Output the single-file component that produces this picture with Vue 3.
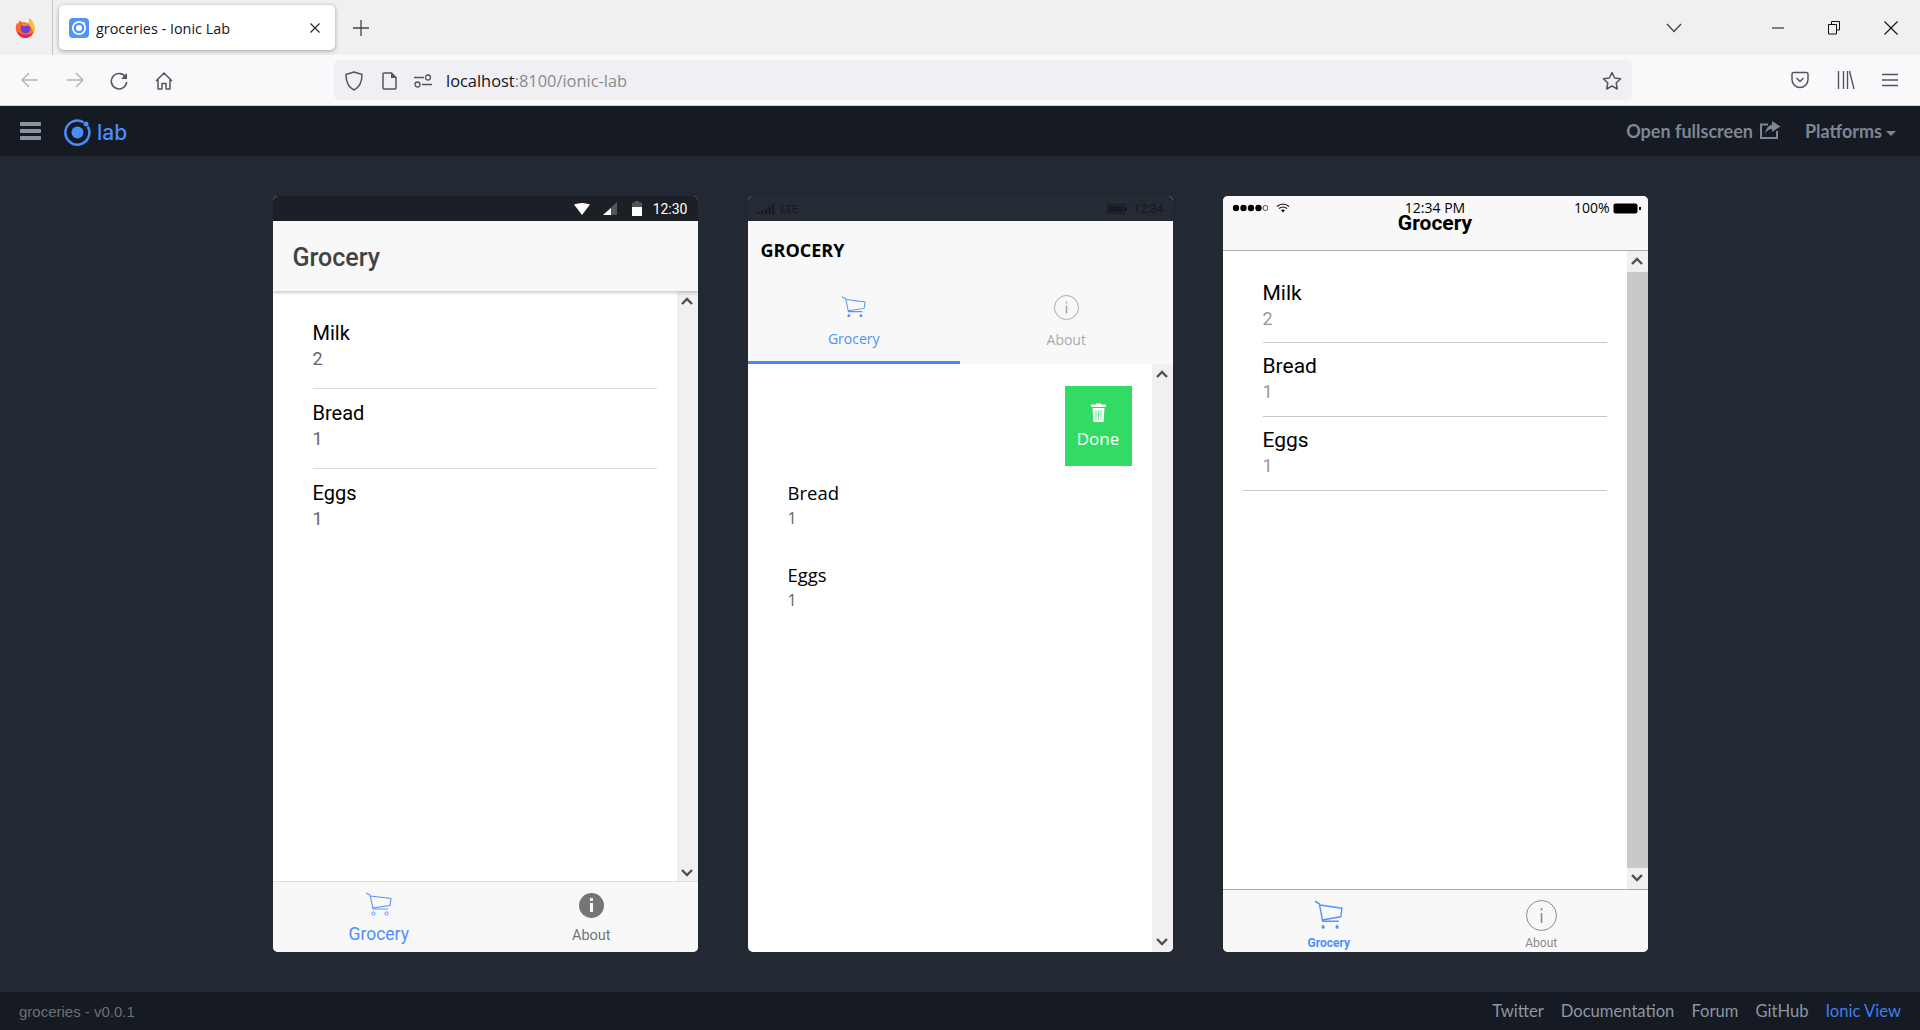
<script setup>
const cart = 'M1 1 L5 3 L8 17 H23 M5.5 4 L26 6.5 L25 13.5 L7.5 16'
const androidItems = [
  { name: 'Milk', qty: 2 },
  { name: 'Bread', qty: 1 },
  { name: 'Eggs', qty: 1 },
]
const wpItems = androidItems.slice(1)
const footerLinks = ['Twitter', 'Documentation', 'Forum', 'GitHub']
</script>

<template>
  <div class="window">
    <!-- browser tabs -->
    <div class="tabstrip">
      <div class="ff-slot">
        <svg width="20" height="20" viewBox="0 0 20 20">
          <path d="M2 5 C0 8 0.500 12 2 15 C4 18.500 7 20 10 20 C15 20 19.500 16 19.500 10.500 C19.500 6 17 2.500 14 0 C15 3 14 5 12.500 5.500 C11 4 9 4 7 4.500 L5 2.500 C4 3.500 3.500 4.500 3.500 5.500Z" fill="#f7692f" />
          <path d="M14 0 C17 2.500 19.500 6 19.500 10.500 C19.500 12 19 14 18 15 C18 11 16 8 13 7 C14 5 15 3 14 0Z" fill="#ffc02e" />
          <path d="M2 13 C3.500 17.500 7 20 10 20 C14 20 17 18 18.500 14.500 C15 17.500 6 17.500 2 13Z" fill="#e5245e" />
          <circle cx="10.500" cy="10.500" r="4.800" fill="#6e3ddb" />
          <path d="M7 6 C10 4.500 13 6 14 8 C12 7.500 10 7.500 8.500 8.500Z" fill="#ff8a2b" />
        </svg>
      </div>
      <div class="tab">
        <svg class="favicon" width="20" height="20" viewBox="0 0 20 20">
          <rect width="20" height="20" rx="4" fill="#4f94fb" />
          <circle cx="10" cy="10" r="6.2" fill="none" stroke="#fff" stroke-width="1.7" />
          <circle cx="10" cy="10" r="3" fill="#fff" />
          <circle cx="14.7" cy="5.3" r="1.2" fill="#fff" />
        </svg>
        <span class="tab-title">groceries - Ionic Lab</span>
        <svg class="tab-close" width="12" height="12" viewBox="0 0 12 12"><path d="M1.5 1.5 L10.5 10.5 M10.5 1.5 L1.5 10.5" stroke="#222" stroke-width="1.1" /></svg>
      </div>
      <svg class="newtab" width="16" height="16" viewBox="0 0 16 16"><path d="M8 0 V16 M0 8 H16" stroke="#444" stroke-width="1.3" /></svg>
      <svg class="tabs-chevron" width="16" height="10" viewBox="0 0 16 10"><path d="M1 1 L8 8.5 L15 1" fill="none" stroke="#444" stroke-width="1.3" /></svg>
      <div class="win-btns">
        <svg width="12" height="12" viewBox="0 0 12 12"><path d="M0 6 H12" stroke="#111" /></svg>
        <svg width="12" height="14" viewBox="0 0 12 14"><path d="M3.5 3 V.5 H11.5 V9 H9 M.5 3.5 H8.5 V13 H.5Z" fill="none" stroke="#111" /></svg>
        <svg width="14" height="14" viewBox="0 0 14 14"><path d="M.5 .5 L13.5 13.5 M13.5 .5 L.5 13.5" stroke="#111" stroke-width="1.1" /></svg>
      </div>
    </div>

    <!-- browser toolbar -->
    <div class="toolbar">
      <div class="nav-btns">
        <svg width="18" height="16" viewBox="0 0 18 16"><path d="M17 8 H1 M8 1 L1 8 L8 15" fill="none" stroke="#b4b4b8" stroke-width="1.5" /></svg>
        <svg width="18" height="16" viewBox="0 0 18 16"><path d="M1 8 H17 M10 1 L17 8 L10 15" fill="none" stroke="#b4b4b8" stroke-width="1.5" /></svg>
        <svg width="18" height="18" viewBox="0 0 18 18"><path d="M15.5 5 A7.7 7.7 0 1 0 16.7 10" fill="none" stroke="#55555c" stroke-width="1.6" /><path d="M17 1 V7 H11Z" fill="#55555c" /></svg>
        <svg width="18" height="18" viewBox="0 0 18 18"><path d="M1 9 L9 1 L17 9 M3 7.5 V17 H7 V11.5 H11 V17 H15 V7.5" fill="none" stroke="#55555c" stroke-width="1.5" stroke-linejoin="round" /></svg>
      </div>
      <div class="urlbar">
        <svg width="18" height="20" viewBox="0 0 18 20"><path d="M9 1 L17 3.5 C17 11 15 16 9 19 C3 16 1 11 1 3.5Z" fill="none" stroke="#55555c" stroke-width="1.5" stroke-linejoin="round" /></svg>
        <svg width="15" height="18" viewBox="0 0 15 18"><path d="M2 1 H9.5 L14 5.5 V16 Q14 17 13 17 H2 Q1 17 1 16 V2 Q1 1 2 1Z" fill="none" stroke="#55555c" stroke-width="1.5" /><path d="M9 1 V6 H14Z" fill="#55555c" /></svg>
        <svg class="perm" width="18" height="14" viewBox="0 0 18 14"><path d="M0 3.5 H10 M8 10.5 H18" stroke="#55555c" stroke-width="1.4" /><circle cx="14" cy="3.5" r="2.5" fill="none" stroke="#55555c" stroke-width="1.3" /><circle cx="3.5" cy="10.5" r="2.5" fill="none" stroke="#55555c" stroke-width="1.3" /></svg>
        <span class="url">localhost<span class="url-rest">:8100/ionic-lab</span></span>
        <svg class="star" width="20" height="20" viewBox="0 0 20 20"><path d="M10 1.5 L12.6 7 L18.6 7.8 L14.2 12 L15.3 18 L10 15 L4.7 18 L5.8 12 L1.4 7.8 L7.4 7Z" fill="none" stroke="#55555c" stroke-width="1.5" stroke-linejoin="round" /></svg>
      </div>
      <div class="tool-btns">
        <svg width="18" height="18" viewBox="0 0 18 18"><path d="M2.5 1.5 H15.5 Q17 1.5 17 3 V8.5 A8 8 0 0 1 1 8.5 V3 Q1 1.5 2.5 1.5Z" fill="none" stroke="#55555c" stroke-width="1.5" /><path d="M5.5 7 L9 10.5 L12.5 7" fill="none" stroke="#55555c" stroke-width="1.5" /></svg>
        <svg width="18" height="20" viewBox="0 0 18 20"><path d="M1.5 1 V19 M6.5 1 V19 M10.5 1 V19 M12.5 1 L17 19" stroke="#55555c" stroke-width="1.4" /></svg>
        <svg width="16" height="14" viewBox="0 0 16 14"><path d="M0 1.5 H16 M0 7 H16 M0 12.5 H16" stroke="#55555c" stroke-width="1.4" /></svg>
      </div>
    </div>

    <!-- ionic lab header -->
    <header class="lab-header">
      <div class="menu-icon"><i></i><i></i><i></i></div>
      <svg class="lab-logo" width="27" height="27" viewBox="0 0 27 27">
        <path d="M19.500 3.300 A12 12 0 1 0 23.700 7.500" fill="none" stroke="#4a8bfc" stroke-width="2.500" />
        <circle cx="13.500" cy="13.500" r="6" fill="#4a8bfc" />
        <circle cx="22" cy="5" r="2.500" fill="#4a8bfc" />
      </svg>
      <span class="lab-word">lab</span>
      <a class="lab-action fullscreen">Open fullscreen</a>
      <svg class="share" width="21" height="18" viewBox="0 0 21 18">
        <path d="M8 3.5 H1 V17 H17 V10" fill="none" stroke="#7c8794" stroke-width="2" />
        <path d="M12 0 L20.5 5.5 L12 11 V8 Q7.5 8 5 13 Q6 5 12 3.5Z" fill="#7c8794" />
      </svg>
      <a class="lab-action">Platforms</a>
      <i class="caret"></i>
    </header>

    <main class="lab-main">
      <!-- android -->
      <section class="phone">
        <div class="status status-md">
          <svg width="16" height="12" viewBox="0 0 16 12"><path d="M0 1.5 Q8 -1.5 16 1.5 L8 12Z" fill="#fff" /></svg>
          <svg class="sig" width="14" height="13" viewBox="0 0 14 13"><path d="M14 0 V13 H0Z" fill="#555" /><path d="M8 6 V13 H0Z" fill="#fff" /></svg>
          <svg class="bat" width="10" height="15" viewBox="0 0 10 15"><path d="M3 0 H7 V1.5 H10 V15 H0 V1.5 H3Z" fill="#555" /><rect y="6" width="10" height="9" fill="#fff" /></svg>
          <span>12:30</span>
        </div>
        <div class="md-toolbar">Grocery</div>
        <div class="content">
          <div class="list md-list">
            <div v-for="it in androidItems" :key="it.name" class="md-item">
              <div class="name">{{ it.name }}</div>
              <div class="qty">{{ it.qty }}</div>
            </div>
          </div>
          <div class="scrollbar md-scroll">
            <svg width="12" height="8" viewBox="0 0 12 8"><path d="M1 7 L6 2 L11 7" fill="none" stroke="#505050" stroke-width="2.4" /></svg>
            <svg width="12" height="8" viewBox="0 0 12 8"><path d="M1 1 L6 6 L11 1" fill="none" stroke="#505050" stroke-width="2.4" /></svg>
          </div>
        </div>
        <nav class="md-tabs">
          <div class="md-tab active">
            <svg width="27" height="24" viewBox="0 0 27 24"><path :d="cart" fill="none" stroke="#5b93fb" stroke-width="1.1" /><circle cx="8.5" cy="21.5" r="1.6" fill="none" stroke="#5b93fb" /><circle cx="21.5" cy="21.5" r="1.6" fill="none" stroke="#5b93fb" /></svg>
            <span class="md-label-active">Grocery</span>
          </div>
          <div class="md-tab">
            <svg width="25" height="25" viewBox="0 0 25 25"><circle cx="12.5" cy="12.5" r="12.5" fill="#757575" /><rect x="11" y="5" width="3" height="3" fill="#f8f8f8" /><rect x="11" y="10" width="3" height="9" fill="#f8f8f8" /></svg>
            <span class="md-label">About</span>
          </div>
        </nav>
      </section>

      <!-- windows -->
      <section class="phone">
        <div class="status status-wp">
          <svg width="17" height="10" viewBox="0 0 17 10"><path d="M0 8h2v2H0zM4 6.5h2V10H4zM8 5h2v5H8zM11.500 2.500h2V10h-2zM15 0h2v10h-2z" fill="#16191e" /></svg>
          <span class="lte">LTE</span>
          <svg class="wp-bat" width="20" height="10" viewBox="0 0 20 10"><rect x=".5" y=".5" width="17" height="9" fill="none" stroke="#16191e" /><rect x="2" y="2" width="14" height="6" fill="#16191e" /><rect x="18" y="3" width="2" height="4" fill="#16191e" /></svg>
          <span>12:34</span>
        </div>
        <div class="wp-head">
          <div class="wp-title">GROCERY</div>
          <nav class="wp-tabs">
            <div class="wp-tab active">
              <svg width="25" height="24" viewBox="0 0 27 24"><path :d="cart" fill="none" stroke="#5b93fb" stroke-width="1.1" /><circle cx="8.500" cy="21.500" r="1.600" fill="#5b93fb" /><circle cx="21.500" cy="21.500" r="1.600" fill="#5b93fb" /></svg>
              <span>Grocery</span>
            </div>
            <div class="wp-tab">
              <svg width="25" height="25" viewBox="0 0 25 25"><circle cx="12.5" cy="12.5" r="12" fill="none" stroke="#aaa" /><rect x="11.700" y="10.500" width="1.600" height="8" fill="#aaa" /><rect x="11.700" y="6.500" width="1.600" height="2" fill="#aaa" /></svg>
              <span>About</span>
            </div>
          </nav>
        </div>
        <div class="content">
          <div class="list wp-list">
            <div class="wp-done-row">
              <button class="done">
                <svg width="15" height="19" viewBox="0 0 15 19"><path d="M5 1.500 V.5 H10 V1.500 H15 V4 H0 V1.500Z M1.500 5 H13.500 L12.500 19 H2.500Z" fill="#fff" /><path d="M5 7 V17 M7.500 7 V17 M10 7 V17" stroke="#33dd66" stroke-width=".7" /></svg>
                <span>Done</span>
              </button>
            </div>
            <div v-for="it in wpItems" :key="it.name" class="wp-item">
              <div class="name">{{ it.name }}</div>
              <div class="qty">{{ it.qty }}</div>
            </div>
          </div>
          <div class="scrollbar wp-scroll">
            <svg width="12" height="8" viewBox="0 0 12 8"><path d="M1 7 L6 2 L11 7" fill="none" stroke="#505050" stroke-width="2.4" /></svg>
            <svg width="12" height="8" viewBox="0 0 12 8"><path d="M1 1 L6 6 L11 1" fill="none" stroke="#505050" stroke-width="2.4" /></svg>
          </div>
        </div>
      </section>

      <!-- ios -->
      <section class="phone">
        <div class="ios-head">
          <div class="ios-status">
            <span class="ios-left">
              <svg width="36" height="8" viewBox="0 0 36 8"><circle cx="4" cy="4" r="3.200" /><circle cx="11.500" cy="4" r="3.200" /><circle cx="19" cy="4" r="3.200" /><circle cx="26.500" cy="4" r="3.200" /><circle cx="33.500" cy="4" r="2.500" fill="none" stroke="#000" stroke-width=".7" /></svg>
              <svg width="14" height="10" viewBox="0 0 14 10"><path d="M1 3.500 Q7 -1.500 13 3.500 M3 5.500 Q7 2.500 11 5.500" fill="none" stroke="#000" stroke-width="1.100" /><path d="M5 7 Q7 5.800 9 7 L7 9.500Z" /></svg>
            </span>
            <span class="ios-time">12:34 PM</span>
            <span class="ios-right">
              <span>100%</span>
              <svg width="28" height="11" viewBox="0 0 28 11"><rect x=".5" y=".5" width="24" height="10" rx="2" /><rect x="26" y="4" width="2" height="3" /></svg>
            </span>
          </div>
          <div class="ios-title">Grocery</div>
        </div>
        <div class="content">
          <div class="list ios-list">
            <div v-for="it in androidItems" :key="it.name" class="ios-item">
              <div class="ios-inner">
                <div class="name">{{ it.name }}</div>
                <div class="qty">{{ it.qty }}</div>
              </div>
            </div>
          </div>
          <div class="scrollbar has-thumb">
            <svg width="12" height="8" viewBox="0 0 12 8"><path d="M1 7 L6 2 L11 7" fill="none" stroke="#505050" stroke-width="2.4" /></svg>
            <div class="thumb"></div>
            <svg width="12" height="8" viewBox="0 0 12 8"><path d="M1 1 L6 6 L11 1" fill="none" stroke="#505050" stroke-width="2.4" /></svg>
          </div>
        </div>
        <nav class="ios-tabs">
          <div class="ios-tab active">
            <svg width="29" height="30" viewBox="0 0 27 24" preserveAspectRatio="none"><path :d="cart" fill="none" stroke="#5b93fb" stroke-width="1.300" /><circle cx="8.500" cy="21.500" r="1.500" fill="#5b93fb" /><circle cx="21.500" cy="21.500" r="1.500" fill="#5b93fb" /></svg>
            <span>Grocery</span>
          </div>
          <div class="ios-tab">
            <svg width="31" height="31" viewBox="0 0 31 31"><circle cx="15.500" cy="15.500" r="15" fill="none" stroke="#8c8c8c" /><rect x="14.700" y="13" width="1.600" height="10" fill="#8c8c8c" /><rect x="14.700" y="8" width="1.600" height="2.500" fill="#8c8c8c" /></svg>
            <span>About</span>
          </div>
        </nav>
      </section>
    </main>

    <footer class="lab-footer">
      <span class="version">groceries - v0.0.1</span>
      <div class="links">
        <a v-for="l in footerLinks" :key="l">{{ l }}</a>
        <a class="ionic-view">Ionic View</a>
      </div>
    </footer>
  </div>
</template>

<style>
html, body { margin: 0; overflow: hidden; }
</style>

<style scoped>
.window { width: 1920px; height: 1030px; display: flex; flex-direction: column; font-family: Roboto, sans-serif; overflow: hidden; }

.tabstrip { height: 55px; flex-shrink: 0; background: #f0f0f0; display: flex; align-items: center; font-family: "Open Sans", sans-serif; }
.ff-slot { width: 53px; height: 100%; box-sizing: border-box; border-right: 1px solid #c8c8c8; display: flex; align-items: center; justify-content: center; padding-right: 2px; }
.tab { margin-left: 6px; width: 276px; height: 45px; box-sizing: border-box; padding: 0 14px 0 10px; background: #fff; border-radius: 5px; box-shadow: 0 1px 4px rgba(0,0,0,0.35); display: flex; align-items: center; }
.tab-title { margin-left: 7px; font-size: 14.400px; color: #15141a; flex: 1; white-space: nowrap; padding-top: 1px; }
.newtab { margin-left: 18px; }
.tabs-chevron { margin-left: auto; margin-right: 90px; }
.win-btns { width: 148px; padding-right: 22px; box-sizing: border-box; display: flex; align-items: center; justify-content: space-between; }

.toolbar { height: 50px; flex-shrink: 0; background: #f9f9fb; border-bottom: 1px solid #d4d4d4; box-sizing: content-box; display: flex; align-items: center; }
.nav-btns { width: 334px; padding: 2px 161px 0 21px; box-sizing: border-box; display: flex; justify-content: space-between; }
.urlbar { width: 1298px; height: 40px; box-sizing: border-box; padding: 1px 10px 0 11px; background: #f0f0f4; border-radius: 5px; display: flex; align-items: center; gap: 19px; }
.perm { margin-left: -2px; }
.url { margin-left: -5px; font-size: 16.400px; color: #15141a; font-family: "Open Sans", sans-serif; }
.url-rest { color: #8a8a8e; }
.star { margin-left: auto; }
.tool-btns { flex: 1; padding: 0 22px 0 159px; display: flex; align-items: center; justify-content: space-between; }

.lab-header { height: 50px; flex-shrink: 0; background: #161a22; display: flex; align-items: center; padding: 0 24px 0 20px; box-sizing: border-box; }
.menu-icon { width: 21px; display: flex; flex-direction: column; gap: 3px; }
.menu-icon i { height: 4px; border-radius: 1px; background: #8a93a0; display: block; }
.lab-logo { margin: 3px 0 0 23px; }
.lab-word { margin: 2px 0 0 6px; font-size: 21px; font-weight: 500; color: #4a8bfc; font-family: Inter, sans-serif; }
.lab-action { font-family: Lato, sans-serif; font-weight: 700; font-size: 18px; color: #7c8794; margin-top: -1px; }
.fullscreen { margin-left: auto; }
.share { margin: -2px 24px 0 7px; }
.caret { margin-left: 4px; margin-top: 4px; width: 0; height: 0; border: 5.5px solid transparent; border-top-color: #7c8794; border-bottom: 0; }

.lab-main { flex: 1; background: #232932; display: flex; justify-content: center; gap: 50px; padding: 40px 0; box-sizing: border-box; min-height: 0; }
.phone { width: 425px; background: #fff; border-radius: 5px; overflow: hidden; display: flex; flex-direction: column; }

.status { height: 25px; flex-shrink: 0; display: flex; align-items: center; box-sizing: border-box; font-size: 14px; }
.status-md { background: #1c1f25; color: #fff; justify-content: flex-end; padding-right: 10px; }
.sig { margin-left: 13px; }
.bat { margin-left: 15px; margin-right: 11px; }
.status-wp { background: #252b34; color: #15181d; padding: 0 9px; font-size: 12px; }
.lte { margin-left: 7px; font-size: 11.500px; }
.wp-bat { margin-left: auto; margin-right: 7px; }

.md-toolbar { height: 70px; flex-shrink: 0; background: #f8f8f8; display: flex; align-items: center; padding-left: 20px; font-size: 25px; font-weight: 500; color: #424242; box-shadow: 0 2px 3px rgba(0,0,0,0.2); z-index: 1; padding-top: 2px; box-sizing: border-box; }

.content { flex: 1; display: flex; min-height: 0; }
.list { flex: 1; min-width: 0; }
.scrollbar { width: 21px; flex-shrink: 0; background: #f0f0f0; display: flex; flex-direction: column; justify-content: space-between; align-items: center; box-sizing: border-box; }
.md-scroll { padding: 6px 0 4px; }
.wp-scroll { padding: 6px 0; }
.has-thumb { padding: 0; }
.has-thumb svg { margin: 6px 0 7px; flex-shrink: 0; }
.thumb { flex: 1; background: #c9c9c9; width: 21px; }

.name { color: #000; font-size: 20px; line-height: 25px; }
.qty { font-size: 18px; line-height: 25px; color: #666; }

.md-list { padding: 18px 20px 0 40px; }
.md-item { height: 80px; box-sizing: border-box; border-bottom: 1px solid #dedede; padding-top: 12px; }
.md-item:last-child { border-bottom: 0; }

.md-tabs { height: 71px; flex-shrink: 0; background: #f8f8f8; border-top: 1px solid #e0e0e0; box-sizing: border-box; display: flex; }
.md-tab { flex: 1; display: flex; flex-direction: column; align-items: center; padding-top: 11px; gap: 8px; }
.md-tab.active { padding-top: 10px; gap: 8px; }
.md-label-active { font-size: 17.500px; line-height: 20px; color: #4f8ffb; }
.md-label { font-size: 14.500px; line-height: 20px; color: #757575; }

.wp-head { flex-shrink: 0; background: #f8f8f8; height: 143px; display: flex; flex-direction: column; }
.wp-title { font-family: "Open Sans", sans-serif; font-weight: 700; font-size: 18px; color: #000; padding: 17px 0 0 13px; line-height: 24px; height: 41px; }
.wp-tabs { flex: 1; display: flex; }
.wp-tab { flex: 1; display: flex; flex-direction: column; align-items: center; gap: 10px; padding-top: 16px; box-sizing: border-box; font-family: "Open Sans", sans-serif; font-size: 14px; line-height: 19px; color: #aaa; }
.wp-tab.active { color: #4f8ffb; border-bottom: 3px solid #4a87f5; }

.wp-list { padding: 0; }
.wp-done-row { display: flex; justify-content: flex-end; padding: 22px 20px 0 0; }
.done { width: 67px; height: 80px; border: 0; padding: 0; background: #32db64; color: #fff; font-family: "Open Sans", sans-serif; font-size: 17px; display: flex; flex-direction: column; align-items: center; justify-content: center; gap: 5px; }
.wp-item { padding: 14px 0 0 40px; height: 68px; }
.wp-item .name { font-size: 18.500px; font-family: "Open Sans", sans-serif; }
.wp-item .qty { font-size: 16px; line-height: 26px; font-family: "Open Sans", sans-serif; }

.ios-head { height: 55px; flex-shrink: 0; background: #f8f8f8; border-bottom: 1px solid #aaa; box-sizing: border-box; padding: 0 7px; }
.ios-status { height: 24px; display: flex; align-items: center; justify-content: space-between; position: relative; font-family: "Open Sans", sans-serif; font-size: 14px; line-height: 14px; color: #000; }
.ios-left { display: flex; align-items: center; gap: 8px; padding-left: 2px; }
.ios-time { position: absolute; left: 50%; transform: translateX(-50%); white-space: nowrap; }
.ios-right { display: flex; align-items: center; gap: 3px; }
.ios-title { text-align: center; font-size: 21px; font-weight: 700; line-height: 16px; color: #000; margin-top: -5px; }

.ios-list { padding: 18px 0 0 20px; }
.ios-item { height: 74px; box-sizing: border-box; }
.ios-item .qty { color: #999; line-height: 24px; }
.ios-inner { height: 100%; box-sizing: border-box; border-bottom: 1px solid #c8c8c8; margin: 0 20px; padding-top: 9px; }
.ios-item:last-child { border-bottom: 1px solid #c8c8c8; margin-right: 20px; }
.ios-item:last-child .ios-inner { border-bottom: 0; margin-right: 0; }
.ios-item .name { line-height: 28px; font-size: 21px; }
.ios-item:first-child .ios-inner { padding-top: 10px; }

.ios-tabs { height: 63px; flex-shrink: 0; background: #f8f8f8; border-top: 1px solid #aaa; box-sizing: border-box; display: flex; }
.ios-tab { flex: 1; display: flex; flex-direction: column; align-items: center; font-size: 12px; color: #8c8c8c; padding-top: 10px; gap: 5px; line-height: 14px; }
.ios-tab.active { color: #4f8ffb; font-weight: 700; gap: 6px; }

.lab-footer { height: 38px; flex-shrink: 0; background: #161a22; display: flex; align-items: center; justify-content: space-between; padding: 0 19px; box-sizing: border-box; font-family: Lato, sans-serif; font-size: 16.600px; color: #8d96a2; }
.version { color: #6b7078; font-size: 15px; font-family: "Liberation Sans", sans-serif; }
.links { display: flex; gap: 17px; margin-top: -1px; }
.ionic-view { color: #3d7df0; }
</style>
